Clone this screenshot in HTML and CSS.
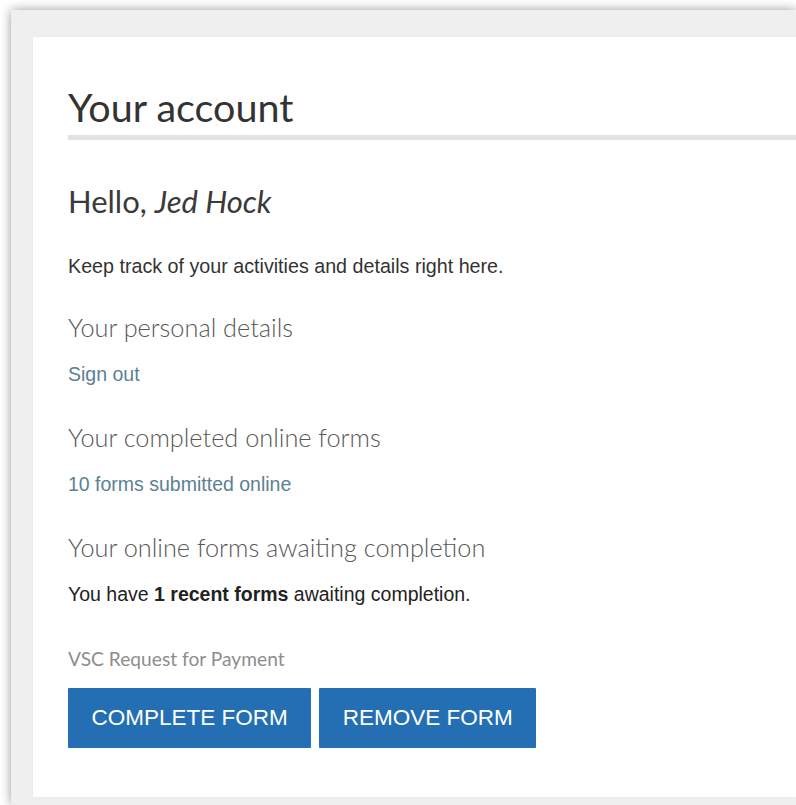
FILE: index.html
```html
<!DOCTYPE html>
<html lang="en">
<head>
<meta charset="utf-8">
<title>Your account</title>
<link rel="stylesheet" href="styles.css">
</head>
<body>
<div class="frame">
  <main class="panel">
    <h1 class="page-title">Your account</h1>
    <h2 class="greeting">Hello, <em>Jed Hock</em></h2>
    <p class="intro">Keep track of your activities and details right here.</p>

    <section class="block block-first">
      <h3 class="block-title">Your personal details</h3>
      <a class="link" href="#">Sign out</a>
    </section>

    <section class="block">
      <h3 class="block-title">Your completed online forms</h3>
      <a class="link" href="#">10 forms submitted online</a>
    </section>

    <section class="block">
      <h3 class="block-title">Your online forms awaiting completion</h3>
      <p class="status">You have <strong>1 recent forms</strong> awaiting completion.</p>
      <p class="form-name">VSC Request for Payment</p>
      <div class="actions">
        <button class="btn" type="button">COMPLETE FORM</button>
        <button class="btn" type="button">REMOVE FORM</button>
      </div>
    </section>
  </main>
</div>
</body>
</html>
```

FILE: styles.css
```css
html, body {
  margin: 0;
  padding: 0;
  background: #ffffff;
}

body {
  width: 796px;
  height: 805px;
  overflow: hidden;
}

/* grey surround with a soft drop shadow on its top and left edges */
.frame {
  box-sizing: border-box;
  margin: 10px 0 0 11px;
  width: 785px;
  padding: 27px 0 8px 22px;
  background: #efefef;
  box-shadow: 0 0 10px rgba(0, 0, 0, 0.4);
}

.panel {
  box-sizing: border-box;
  height: 760px;
  padding: 46px 0 0 35px;
  background: #ffffff;
  box-shadow: 0 0 2px rgba(0, 0, 0, 0.06);
}

.page-title {
  margin: 0;
  font-family: Lato, "Open Sans", sans-serif;
  font-weight: 400;
  font-size: 39.5px;
  line-height: 48px;
  color: #333333;
  padding-bottom: 4px;
  border-bottom: 5px solid #e2e2e2;
}

.greeting {
  margin: 43px 0 0;
  font-family: Lato, "Open Sans", sans-serif;
  font-weight: 400;
  font-size: 31px;
  line-height: 36px;
  color: #3a3a3a;
}

.greeting em {
  font-style: italic;
}

.intro {
  margin: 36px 0 0;
  font-family: "Liberation Sans", Arial, sans-serif;
  font-size: 19.7px;
  line-height: 22px;
  color: #333333;
}

.block {
  margin-top: 37px;
}

.block-first {
  margin-top: 35px;
}

.block-title {
  margin: 0 0 21px;
  font-family: Lato, "Open Sans", sans-serif;
  font-weight: 300;
  font-size: 25.3px;
  line-height: 30px;
  color: #585858;
}

.link {
  display: block;
  font-family: "Liberation Sans", Arial, sans-serif;
  font-size: 19.5px;
  line-height: 22px;
  color: #5b8193;
  text-decoration: none;
}

.status {
  margin: 0;
  font-family: "Liberation Sans", Arial, sans-serif;
  font-size: 19.5px;
  line-height: 22px;
  color: #222222;
}

.form-name {
  margin: 43px 0 0;
  font-family: Lato, "Open Sans", sans-serif;
  font-weight: 400;
  font-size: 19.2px;
  line-height: 22px;
  color: #8d8d8d;
}

.actions {
  display: flex;
  gap: 8px;
  margin-top: 18px;
}

.btn {
  height: 60px;
  padding: 0 23.5px;
  border: 0;
  border-radius: 1px;
  background: #246fb3;
  color: #ffffff;
  font-family: "Liberation Sans", Arial, sans-serif;
  font-size: 22.5px;
  cursor: pointer;
}
```
